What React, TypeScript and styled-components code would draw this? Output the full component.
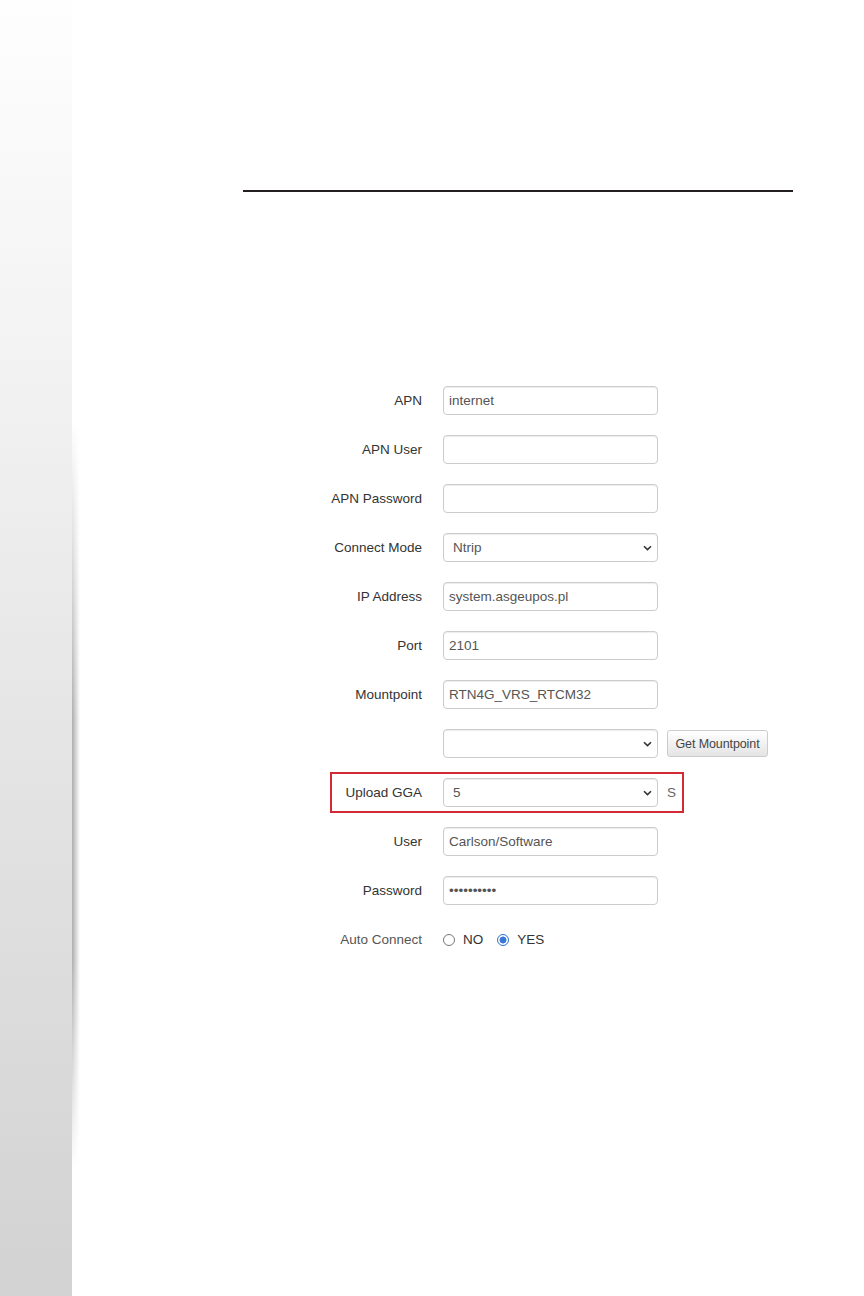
import styled, { createGlobalStyle, css } from 'styled-components';

const GlobalStyle = createGlobalStyle`
  html,
  body {
    margin: 0;
    padding: 0;
    background: #ffffff;
  }

  body {
    font-family: 'Liberation Sans', Arial, sans-serif;
  }
`;

const Page = styled.div`
  display: flex;
  width: 864px;
  height: 1296px;
  background: #ffffff;
  overflow: hidden;
`;

const SideStrip = styled.div`
  flex: none;
  width: 72px;
  background: linear-gradient(
    to bottom,
    #fefefe 0px,
    #f1f1f1 400px,
    #dfdfdf 900px,
    #d2d2d2 1296px
  );
`;

const StripShadow = styled.div`
  flex: none;
  width: 8px;
  background: linear-gradient(to right, rgba(0, 0, 0, 0.32), rgba(0, 0, 0, 0));
  mask-image: linear-gradient(
    to bottom,
    transparent 420px,
    black 720px,
    black 960px,
    transparent 1170px
  );
`;

const Main = styled.main`
  flex: 1;
  display: flex;
  flex-direction: column;
  padding-top: 190px;
`;

const Rule = styled.hr`
  margin: 0 0 0 163px;
  width: 550px;
  height: 2px;
  border: none;
  background: #231f20;
`;

const Form = styled.form`
  display: flex;
  flex-direction: column;
  gap: 20px;
  margin: 194px 0 0 256px;
`;

const Row = styled.div<{ $highlight?: boolean }>`
  display: flex;
  align-items: center;
  gap: 21px;
  width: fit-content;
  height: 29px;

  ${(props) =>
    props.$highlight &&
    css`
      padding-right: 2px;
      outline: 2px solid #d42a36;
      outline-offset: 4px;
    `}
`;

const Label = styled.label<{ $muted?: boolean }>`
  flex: none;
  display: flex;
  justify-content: flex-end;
  width: 86px;
  white-space: nowrap;
  font-size: 13.5px;
  color: ${(props) => (props.$muted ? '#555555' : '#333333')};
`;

const Controls = styled.div`
  display: flex;
  align-items: center;
  gap: 9px;
`;

const fieldBase = css`
  box-sizing: border-box;
  width: 215px;
  height: 29px;
  margin: 0;
  border: 1px solid #cccccc;
  border-radius: 4px;
  background: #ffffff;
  box-shadow: inset 0 1px 1px rgba(0, 0, 0, 0.075);
  font-family: 'Liberation Sans', Arial, sans-serif;
  font-size: 13.5px;
  color: #555555;
  outline: none;
`;

const TextInput = styled.input`
  ${fieldBase};
  padding: 0 5px;
`;

const SelectWrap = styled.div`
  display: grid;
  align-items: center;
`;

const Select = styled.select`
  ${fieldBase};
  grid-area: 1 / 1;
  appearance: none;
  padding: 0 24px 0 9px;
`;

const Chevron = styled.svg`
  grid-area: 1 / 1;
  justify-self: end;
  margin-right: 6px;
  pointer-events: none;
`;

const Button = styled.button`
  box-sizing: border-box;
  width: 101px;
  height: 27px;
  margin: 0;
  padding: 0;
  border: 1px solid #cccccc;
  border-radius: 3px;
  background: linear-gradient(to bottom, #ffffff, #e4e4e4);
  font-family: 'Liberation Sans', Arial, sans-serif;
  font-size: 12.5px;
  letter-spacing: -0.1px;
  color: #444444;
  white-space: nowrap;
`;

const Unit = styled.span`
  font-size: 13.5px;
  color: #666666;
`;

const RadioGroup = styled.div`
  display: flex;
  align-items: center;
  gap: 14px;
`;

const RadioOption = styled.label`
  display: flex;
  align-items: center;
  gap: 8px;
  font-size: 13.5px;
  color: #333333;
`;

const Radio = styled.input`
  appearance: none;
  box-sizing: border-box;
  width: 12px;
  height: 12px;
  margin: 0;
  border: 1px solid #777777;
  border-radius: 50%;
  background: #ffffff;

  &:checked {
    border-color: #2f6fd0;
    background: radial-gradient(circle, #3a78d6 0 3.2px, #ffffff 3.8px);
  }
`;

const ChevronIcon = () => (
  <Chevron width="9" height="6" viewBox="0 0 9 6">
    <path d="M1 1.2l3.5 3.4L8 1.2" fill="none" stroke="#333" strokeWidth="1.6" />
  </Chevron>
);

const SelectField = ({ value, options }: { value: string; options: string[] }) => (
  <SelectWrap>
    <Select value={value} onChange={() => undefined}>
      {options.map((option) => (
        <option key={option} value={option}>
          {option}
        </option>
      ))}
    </Select>
    <ChevronIcon />
  </SelectWrap>
);

const textRows = [
  { label: 'APN', value: 'internet' },
  { label: 'APN User', value: '' },
  { label: 'APN Password', value: '' },
];

const serverRows = [
  { label: 'IP Address', value: 'system.asgeupos.pl' },
  { label: 'Port', value: '2101' },
  { label: 'Mountpoint', value: 'RTN4G_VRS_RTCM32' },
];

const App = () => {
  return (
    <>
      <GlobalStyle />
      <Page>
        <SideStrip />
        <StripShadow />
        <Main>
          <Rule />
          <Form onSubmit={(e) => e.preventDefault()}>
            {textRows.map((row) => (
              <Row key={row.label}>
                <Label>{row.label}</Label>
                <TextInput value={row.value} readOnly />
              </Row>
            ))}
            <Row>
              <Label>Connect Mode</Label>
              <SelectField value="Ntrip" options={['Ntrip', 'TCP']} />
            </Row>
            {serverRows.map((row) => (
              <Row key={row.label}>
                <Label>{row.label}</Label>
                <TextInput value={row.value} readOnly />
              </Row>
            ))}
            <Row>
              <Label />
              <Controls>
                <SelectField value="" options={['']} />
                <Button type="button">Get Mountpoint</Button>
              </Controls>
            </Row>
            <Row $highlight>
              <Label>Upload GGA</Label>
              <Controls>
                <SelectField value="5" options={['1', '5', '10']} />
                <Unit>S</Unit>
              </Controls>
            </Row>
            <Row>
              <Label>User</Label>
              <TextInput value="Carlson/Software" readOnly />
            </Row>
            <Row>
              <Label>Password</Label>
              <TextInput type="password" value="abcdefghij" readOnly />
            </Row>
            <Row>
              <Label $muted>Auto Connect</Label>
              <RadioGroup>
                <RadioOption>
                  <Radio type="radio" name="auto" readOnly />
                  NO
                </RadioOption>
                <RadioOption>
                  <Radio type="radio" name="auto" checked readOnly />
                  YES
                </RadioOption>
              </RadioGroup>
            </Row>
          </Form>
        </Main>
      </Page>
    </>
  );
};

export default App;
